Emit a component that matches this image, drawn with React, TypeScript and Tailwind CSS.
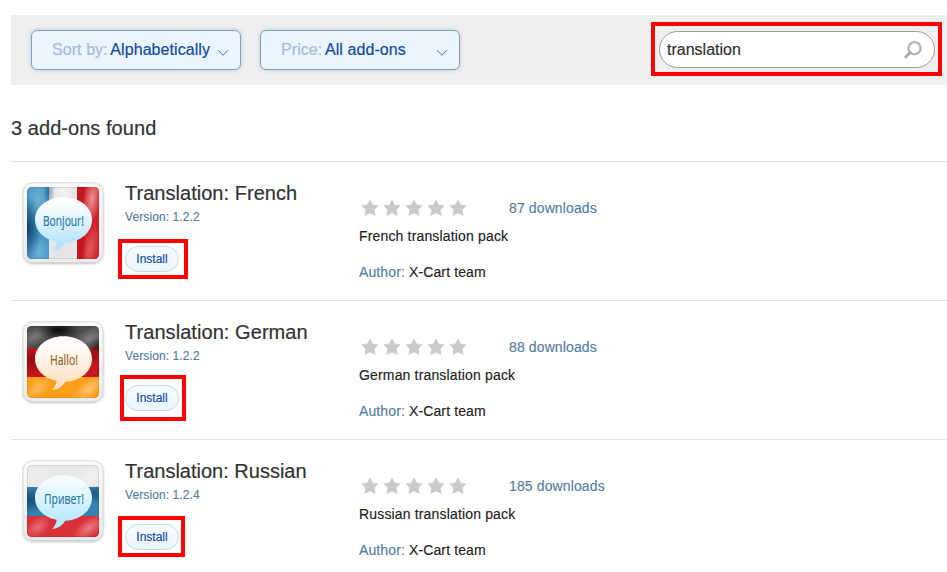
type Addon = {
  lang: string;
  version: string;
  downloads: number;
  greeting: string;
  greetingX: number;
  greetingWidth: number;
  ink: string;
  bubble: [string, string];
  stripes: string[];
  vertical?: boolean;
  mark: string;
  titleSpacing: string;
};

const addons: Addon[] = [
  {
    lang: 'French', version: '1.2.2', downloads: 87,
    greeting: 'Bonjour!', greetingX: 21, greetingWidth: 41, ink: '#2678a4',
    bubble: ['#ffffff', '#b5e6ff'], stripes: ['#4a9cc8', '#e6e6e6', '#d3242b'], vertical: true,
    mark: '-left-[7px] -top-[7px] h-[40px] w-[70px]', titleSpacing: 'tracking-[0.03px]',
  },
  {
    lang: 'German', version: '1.2.2', downloads: 88,
    greeting: 'Hallo!', greetingX: 28, greetingWidth: 28, ink: '#94602c',
    bubble: ['#ffffff', '#ffe3c5'], stripes: ['#4c4c4c', '#c51620', '#ff9e18'],
    mark: '-left-[5px] -top-[10px] h-[46px] w-[66px]', titleSpacing: 'tracking-[0.06px]',
  },
  {
    lang: 'Russian', version: '1.2.4', downloads: 185,
    greeting: 'Привет!', greetingX: 22, greetingWidth: 40, ink: '#2678a4',
    bubble: ['#f5fcff', '#b8e9ff'], stripes: ['#e9e9e9', '#3282b4', '#d83138'],
    mark: '-left-[7px] -top-[8px] h-[41px] w-[67px]', titleSpacing: 'tracking-normal',
  },
];

function FlagIcon({ a }: { a: Addon }) {
  const id = a.lang;
  return (
    <svg width="86" height="88" viewBox="0 0 86 88" className="block shrink-0">
      <defs>
        <linearGradient id={id + 'b'} x1="0" y1="0" x2="0" y2="1">
          <stop offset="0.1" stopColor={a.bubble[0]} />
          <stop offset="0.85" stopColor={a.bubble[1]} />
        </linearGradient>
        <linearGradient id={id + 'f'} x1="0" y1="0" x2="0" y2="1">
          <stop offset="0" stopColor="#fafafa" />
          <stop offset="1" stopColor="#ebebeb" />
        </linearGradient>
        <radialGradient id={id + 'l'}>
          <stop offset="0" stopColor="#fff" stopOpacity="0.5" />
          <stop offset="1" stopColor="#fff" stopOpacity="0" />
        </radialGradient>
        <radialGradient id={id + 'd'}>
          <stop offset="0" stopColor={a.vertical ? '#00285a' : a.lang === 'Russian' ? '#002a50' : '#300'} stopOpacity="0.8" />
          <stop offset="1" stopColor={a.vertical ? '#00285a' : '#200'} stopOpacity="0" />
        </radialGradient>
        <radialGradient id={id + 'k'}>
          <stop offset="0" stopColor="#000" stopOpacity="0.9" />
          <stop offset="1" stopColor="#000" stopOpacity="0" />
        </radialGradient>
        <clipPath id={id + 'c'}><rect x="5" y="5" width="72" height="72" rx="4.5" /></clipPath>
        <filter id={id + 's'} x="-10%" y="-10%" width="120%" height="125%">
          <feDropShadow dx="0" dy="0.8" stdDeviation="0.8" floodColor="#000" floodOpacity="0.3" />
        </filter>
      </defs>
      <rect x="1" y="0.8" width="80" height="79.7" rx="10" fill={`url(#${id}f)`} stroke="#d4d4d4" strokeWidth="0.8" filter={`url(#${id}s)`} />
      <g clipPath={`url(#${id}c)`}>
        {a.stripes.map((c, i) =>
          a.vertical
            ? <rect key={c} x={[5, 27, 55][i]} y="5" width={[22, 28, 22][i]} height="72" fill={c} />
            : <rect key={c} x="5" y={[5, 27, 56][i]} width="72" height={[22, 29, 21][i]} fill={c} />
        )}
        {a.vertical ? (
          <>
            <ellipse cx="6" cy="46" rx="14" ry="32" fill={`url(#${id}d)`} />
            <ellipse cx="27" cy="10" rx="6" ry="15" fill={`url(#${id}d)`} opacity="0.5" />
            <rect x="55" y="5" width="8" height="72" fill="#a30008" opacity="0.35" />
            <ellipse cx="70" cy="17" rx="9" ry="27" transform="rotate(10 70 17)" fill={`url(#${id}l)`} />
            <ellipse cx="68" cy="67" rx="8" ry="25" transform="rotate(12 68 67)" fill={`url(#${id}l)`} opacity="0.5" />
            <ellipse cx="16" cy="17" rx="10" ry="20" fill={`url(#${id}l)`} opacity="0.4" />
            <ellipse cx="17" cy="70" rx="10" ry="16" fill={`url(#${id}l)`} opacity="0.4" />
            <ellipse cx="41" cy="9" rx="12" ry="12" fill={`url(#${id}l)`} />
          </>
        ) : (
          <>
            {a.lang === 'German' && (
              <>
                <ellipse cx="36" cy="9" rx="22" ry="10" fill={`url(#${id}k)`} />
                <ellipse cx="76" cy="24" rx="14" ry="9" fill={`url(#${id}k)`} opacity="0.6" />
              </>
            )}
            <g opacity={a.lang === 'German' ? 0.65 : 1}>
              <ellipse cx="8" cy="40" rx="15" ry="13" fill={`url(#${id}d)`} opacity="0.75" />
              <ellipse cx="73" cy="34" rx="12" ry="9" fill={`url(#${id}d)`} opacity="0.55" />
            </g>
            <ellipse cx="68" cy="18" rx="20" ry="11" transform="rotate(-30 68 18)" fill={`url(#${id}l)`} opacity="0.6" />
            <ellipse cx="12" cy="16" rx="20" ry="9" transform="rotate(-25 12 16)" fill={`url(#${id}l)`} opacity="0.5" />
            <ellipse cx="67" cy="68" rx="19" ry="9" transform="rotate(-35 67 68)" fill={`url(#${id}l)`} opacity="0.75" />
            <ellipse cx="16" cy="67" rx="15" ry="9" transform="rotate(-35 16 67)" fill={`url(#${id}l)`} opacity="0.6" />
          </>
        )}
        <rect x="5.5" y="5.5" width="71" height="71" rx="4" fill="none" stroke="#400" strokeOpacity="0.1" />
      </g>
      <path
        d="M41.5 15.2 C57.5 15.2 70 25 70 37.8 C70 50.5 58 60.5 43.2 60.7 C40 66 35.5 68.5 30 69 C33 66 34.5 62.5 34.7 59.8 C22 57.5 13 48.7 13 37.8 C13 25 25.5 15.2 41.5 15.2Z"
        fill={`url(#${id}b)`}
      />
      <text
        x={a.greetingX} y="43.5" fontFamily="'Open Sans', sans-serif" fontWeight="500" fontSize="15"
        textLength={a.greetingWidth} lengthAdjust="spacingAndGlyphs" fill={a.ink} stroke={a.ink} strokeWidth="0.2"
      >
        {a.greeting}
      </text>
    </svg>
  );
}

function Stars() {
  return (
    <svg width="106" height="18" viewBox="0 0 106 18" className="block">
      {[0, 22, 44, 66, 88].map((x) => (
        <path
          key={x}
          transform={`translate(${x} 0)`}
          d="M9 0.8 L11.6 5.9 L17.2 6.7 L13.3 10.8 L14.2 16.5 L9 14.1 L3.8 16.5 L4.7 10.8 L0.8 6.7 L6.4 5.9Z"
          fill="#cacaca"
          stroke="#cacaca"
          strokeWidth="0.5"
        />
      ))}
    </svg>
  );
}

function Dropdown({ label, value, width }: { label: string; value: string; width: string }) {
  return (
    <button className={`flex h-[40px] items-center justify-between rounded-[6px] border border-[#7ba2c8] bg-[#ebf5ff] pl-[20px] pr-[11px] text-left text-[16px] leading-[20px] shadow-[0_0_4px_rgba(0,0,0,0.18)] ${width}`}>
      <span className="whitespace-nowrap tracking-[0.07px] text-[#124b9f] [-webkit-text-stroke:0.2px]">
        <span className="-mr-[1px] text-[#a4bcdc]">{label}</span> {value}
      </span>
      <svg width="12" height="8" viewBox="0 0 12 8" className="mt-[5px] shrink-0">
        <path d="M0.8 1 L6 6.3 L11.2 1" fill="none" stroke="#3d70ac" strokeWidth="1" />
      </svg>
    </button>
  );
}

export default function App() {
  return (
    <main className="h-[572px] w-[947px] overflow-hidden bg-white pl-[11px] pt-[15px] font-['Liberation_Sans',Arial,sans-serif] text-[#333]">
      <header className="flex h-[70px] items-start bg-[#efefef] pl-[20px] pt-[15px]">
        <Dropdown label="Sort by:" value="Alphabetically" width="w-[210px]" />
        <div className="ml-[19px]">
          <Dropdown label="Price:" value="All add-ons" width="w-[200px]" />
        </div>
        <div className="relative ml-[199px] mt-px flex h-[37px] w-[276px] items-center justify-between rounded-full border border-[#9c9c9c] bg-white pl-[7px] pr-[11px]">
          <span className="text-[16px] leading-[20px] text-[#333] [-webkit-text-stroke:0.2px]">translation</span>
          <svg width="20" height="20" viewBox="0 0 20 20">
            <circle cx="11.5" cy="8.2" r="6.1" fill="none" stroke="#b4b4b4" strokeWidth="2.3" />
            <path d="M7 12.6 L2.7 17" stroke="#acacac" strokeWidth="3" strokeLinecap="round" />
          </svg>
          <div className="pointer-events-none absolute -left-[9px] -top-[10px] h-[54px] w-[291px] border-4 border-[#ff0000]" />
        </div>
      </header>
      <h1 className="mt-[31px] h-[45px] text-[20px] leading-[24px] tracking-[0.05px] [-webkit-text-stroke:0.2px]">3 add-ons found</h1>
      {addons.map((a) => (
        <section key={a.lang} className="flex h-[139px] border-t border-[#e3e3e3] pl-[11px] pt-[20px]">
          <FlagIcon a={a} />
          <div className="-mt-px ml-[17px] w-[234px]">
            <h2 className={`text-[20px] leading-[24px] [-webkit-text-stroke:0.2px] ${a.titleSpacing}`}>Translation: {a.lang}</h2>
            <p className="mt-[5px] text-[12px] leading-[14px] tracking-[0.1px] text-[#557d9f] [-webkit-text-stroke:0.15px]">Version: {a.version}</p>
            <div className="relative mt-[22px] h-[26px] w-[54px]">
              <button className="h-[26px] w-[54px] rounded-full border border-[#c5dbe8] bg-linear-to-b from-[#f7fbff] to-[#eaf5ff] text-[12px] leading-[24px] text-[#124b9f] [-webkit-text-stroke:0.15px]">Install</button>
              <div className={`pointer-events-none absolute border-4 border-[#ff0000] ${a.mark}`} />
            </div>
          </div>
          <div className="text-[14px] leading-[18px] tracking-[0.12px] [-webkit-text-stroke:0.15px]">
            <div className="flex h-[35px] items-end">
              <div className="ml-[2px] w-[148px]"><Stars /></div>
              <span className="text-[#557d9f]">{a.downloads} downloads</span>
            </div>
            <p className="mt-[10px] tracking-[0.16px] text-[#222]">{a.lang} translation pack</p>
            <p className="mt-[18px] text-[#222]"><span className="text-[#557d9f]">Author:</span> X-Cart team</p>
          </div>
        </section>
      ))}
    </main>
  );
}
